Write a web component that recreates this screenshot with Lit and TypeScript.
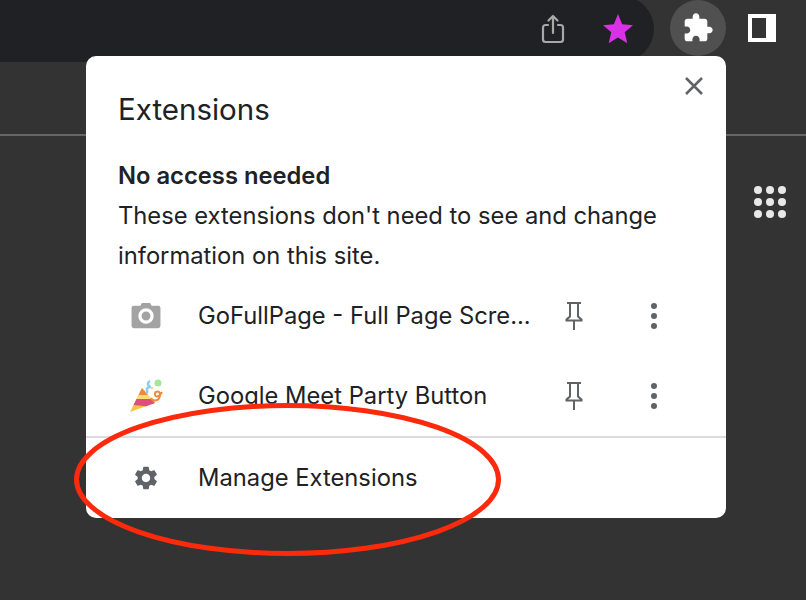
import { LitElement, css, html, svg } from 'lit';
import { customElement } from 'lit/decorators.js';

const pin = svg`<path d="M2 2h14M5 2v13.5L1.5 18.5v1h15v-1L13 15.500V2M9 19.500V29" fill="none" stroke="#5f6368" stroke-width="2"/>`;

@customElement('app-root')
export class AppRoot extends LitElement {
	static styles = css`
    :host {
      display: block;
      position: relative;
      width: 806px;
      height: 600px;
      overflow: hidden;
      background: #333333;
      font-family: Inter, Roboto, "Liberation Sans", sans-serif;
    }

    svg {
      display: block;
      flex: none;
    }

    .toolbar {
      height: 62px;
      display: flex;
      align-items: flex-start;
    }

    .omnibox {
      width: 654px;
      height: 66px;
      margin-top: -4px;
      padding-right: 21px;
      box-sizing: border-box;
      display: flex;
      align-items: center;
      justify-content: flex-end;
      gap: 38px;
      background: #202124;
      border-radius: 0 33px 33px 0;
    }

    .ext-button {
      width: 56px;
      height: 56px;
      margin-left: 16px;
      border-radius: 50%;
      background: #505050;
      display: flex;
      align-items: center;
      justify-content: center;
    }

    .side-panel {
      width: 28px;
      height: 28px;
      margin: 14px 0 0 22px;
      box-sizing: border-box;
      border: 4px solid #fff;
      border-right-width: 10px;
      background: #333333;
    }

    .band {
      height: 72px;
      border-bottom: 2px solid #666666;
    }

    .apps {
      display: grid;
      grid-template-columns: repeat(3, 8px);
      grid-auto-rows: 8px;
      gap: 4px;
      width: max-content;
      margin: 50px 20px 0 auto;
    }

    .apps span {
      border-radius: 50%;
      background: #e8e8e8;
    }

    .popup {
      position: absolute;
      left: 86px;
      top: 56px;
      width: 640px;
      height: 462px;
      box-sizing: border-box;
      display: flex;
      flex-direction: column;
      background: #fff;
      border-radius: 10px;
      color: #202124;
      font-size: 23.75px;
    }

    .head {
      height: 92px;
      padding: 20px 22px 0 32px;
      box-sizing: border-box;
      display: flex;
      justify-content: space-between;
    }

    .title {
      font-size: 29.5px;
      line-height: 66px;
    }

    .note {
      padding: 8px 32px 0;
      line-height: 40px;
    }

    .note b {
      display: block;
      font-weight: 600;
    }

    .row {
      height: 80px;
      display: flex;
      align-items: center;
      flex: none;
    }

    .row .icon {
      width: 112px;
      display: flex;
      justify-content: center;
      padding-left: 8px;
      box-sizing: border-box;
      flex: none;
    }

    .row .name {
      width: 333px;
      padding-bottom: 2px;
      white-space: nowrap;
    }

    .pin {
      margin-left: 34px;
    }

    .dots {
      margin-left: 68px;
      display: flex;
      flex-direction: column;
      gap: 4px;
    }

    .dots span {
      width: 6px;
      height: 6px;
      border-radius: 50%;
      background: #5f6368;
    }

    .manage {
      height: 82px;
      border-top: 2px solid #dadce0;
      margin-top: auto;
      box-sizing: border-box;
    }

    .mark {
      position: absolute;
      left: 0;
      top: 0;
      pointer-events: none;
    }
  `;

	private renderRow(name: string, icon: unknown) {
		return html`
      <div class="row">
        <div class="icon">${icon}</div>
        <div class="name">${name}</div>
        <svg class="pin" width="18" height="30" viewBox="0 0 18 30">${pin}</svg>
        <div class="dots"><span></span><span></span><span></span></div>
      </div>
    `;
	}

	render() {
		const camera = html`<svg width="30" height="28" viewBox="0 0 32 30">
      <path fill="#a3a3a3" d="M10 4l1.500-3h9L22 4h7a2.500 2.500 0 0 1 2.500 2.500v19A2.500 2.500 0 0 1 29 28H3a2.500 2.500 0 0 1-2.500-2.500v-19A2.500 2.500 0 0 1 3 4z"/>
      <circle cx="16" cy="15" r="6.500" fill="none" stroke="#fff" stroke-width="3.500"/>
    </svg>`;

		const party = html`<svg width="36" height="36" viewBox="0 0 36 36">
      <path fill="#f6c445" d="M2 34l12-24 13 15z"/>
      <path fill="#ee8a3a" d="M14 10l-3.500 7H20z"/>
      <path fill="#f9dd7a" d="M10.500 17H20l3.500 4h-15z"/>
      <path fill="#dd4f78" d="M8.500 21h15l3.500 4-9 3.200-12.500-1.200z"/>
      <path fill="none" stroke="#8ccbf2" stroke-width="2.500" d="M18 15c3-1-.5-3 1.500-5s3.500 0 1.500-2-1-4 1-5"/>
      <circle cx="30" cy="5" r="3.500" fill="#a6e59b"/>
      <circle cx="24" cy="10" r="1" fill="#f6c445"/>
      <circle cx="27" cy="14" r="1" fill="#f6c445"/>
      <path fill="none" stroke="#ee8a3a" stroke-width="2" d="M23 20c2 4 9 3 9-3s-6-3-5 0 5 1 7-3"/>
    </svg>`;

		return html`
      <div class="toolbar">
        <div class="omnibox">
          <svg width="24" height="30" viewBox="0 0 24 30">
            <path fill="none" stroke="#a8a8a8" stroke-width="2.200" stroke-linecap="round" stroke-linejoin="round" d="M7 11H4.500A2.500 2.500 0 0 0 2 13.500v12A2.500 2.500 0 0 0 4.500 28h15a2.500 2.500 0 0 0 2.500-2.500v-12a2.500 2.500 0 0 0-2.500-2.500H17M12 19V2M7.500 6.500L12 2l4.500 4.500"/>
          </svg>
          <svg width="30" height="30" viewBox="0 0 30 30">
            <path fill="#d932e6" d="M15 0l4.100 10.300 10.900.9-8.300 7.100 2.600 11L15 23.400 5.700 29.300l2.600-11L0 11.200l10.900-.9z"/>
          </svg>
        </div>
        <div class="ext-button">
          <svg width="32" height="32" viewBox="0 0 24 24">
            <path fill="#fff" d="M20.500 11H19V7c0-1.100-.9-2-2-2h-4V3.500C13 2.120 11.880 1 10.500 1S8 2.120 8 3.500V5H4c-1.100 0-1.990.9-1.990 2v3.800H3.500c1.490 0 2.700 1.210 2.700 2.700s-1.210 2.700-2.700 2.700H2V20c0 1.100.9 2 2 2h3.800v-1.500c0-1.490 1.210-2.700 2.700-2.700 1.490 0 2.700 1.210 2.700 2.700V22H17c1.100 0 2-.9 2-2v-4h1.500c1.380 0 2.500-1.120 2.500-2.500S21.880 11 20.500 11z"/>
          </svg>
        </div>
        <div class="side-panel"></div>
      </div>

      <div class="band"></div>
      <div class="apps">
        ${Array.from({ length: 9 }, () => html`<span></span>`)}
      </div>

      <div class="popup">
        <div class="head">
          <div class="title">Extensions</div>
          <svg width="20" height="20" viewBox="0 0 20 20">
            <path d="M2 2l16 16M18 2L2 18" fill="none" stroke="#5f6368" stroke-width="2.500"/>
          </svg>
        </div>
        <div class="note">
          <b>No access needed</b>
          These extensions don't need to see and change information on this site.
        </div>
        ${this.renderRow('GoFullPage - Full Page Scre...', camera)}
        ${this.renderRow('Google Meet Party Button', party)}
        <div class="row manage">
          <div class="icon">
            <svg width="28" height="28" viewBox="0 0 24 24">
              <path fill="#5f6368" d="M19.140 12.940c.04-.3.06-.61.06-.94 0-.32-.02-.64-.07-.94l2.030-1.580c.18-.14.23-.41.12-.61l-1.920-3.320c-.12-.22-.37-.29-.59-.22l-2.390.96c-.5-.38-1.030-.7-1.620-.94l-.36-2.540c-.04-.24-.24-.41-.48-.41h-3.840c-.24 0-.43.17-.47.41l-.36 2.540c-.59.24-1.130.57-1.620.94l-2.390-.96c-.22-.08-.47 0-.59.22L2.740 8.870c-.12.21-.08.47.12.61l2.030 1.580c-.05.3-.09.63-.09.94s.02.64.07.94l-2.030 1.580c-.18.14-.23.41-.12.61l1.920 3.320c.12.22.37.29.59.22l2.390-.96c.5.38 1.030.7 1.620.94l.36 2.540c.05.24.24.41.48.41h3.840c.24 0 .44-.17.47-.41l.36-2.540c.59-.24 1.130-.56 1.620-.94l2.390.96c.22.08.47 0 .59-.22l1.920-3.320c.12-.22.07-.47-.12-.61l-2.010-1.580zM12 15.600c-1.980 0-3.600-1.620-3.600-3.600s1.620-3.600 3.600-3.600 3.600 1.620 3.600 3.600-1.620 3.600-3.600 3.600z"/>
            </svg>
          </div>
          <div class="name">Manage Extensions</div>
        </div>
      </div>

      <svg class="mark" width="806" height="600" viewBox="0 0 806 600">
        <ellipse cx="287.500" cy="479.500" rx="211" ry="74" fill="none" stroke="#fb2a0c" stroke-width="5"/>
      </svg>
    `;
	}
}
